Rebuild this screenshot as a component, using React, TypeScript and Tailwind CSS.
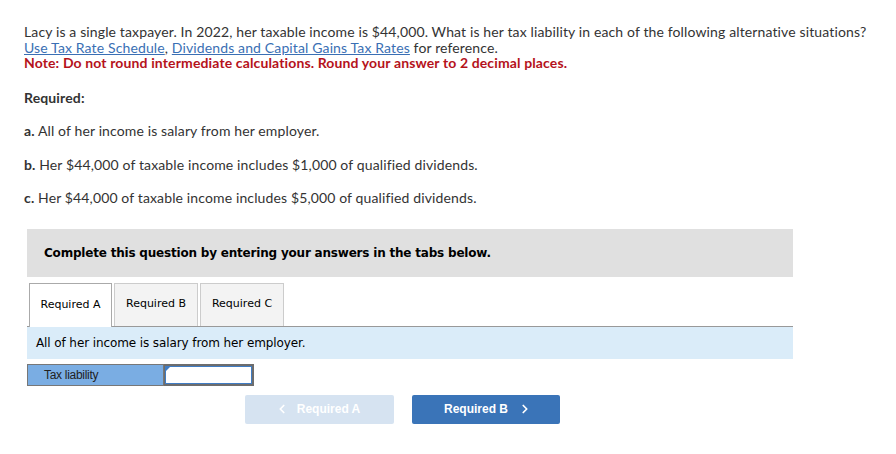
import { ChevronLeft, ChevronRight } from 'lucide-react';

const body = { fontFamily: 'Lato, "Open Sans", sans-serif' };
const verdana = { fontFamily: '"DejaVu Sans", Verdana, sans-serif' };
const arial = { fontFamily: '"Liberation Sans", Arial, sans-serif' };

export default function App() {
  const tabs = ['Required A', 'Required B', 'Required C'];

  return (
    <div className="h-[454px] w-[896px] bg-white text-[#333]">
      {/* Question */}
      <div
        className="pl-[24px] pt-[24px] text-[14px] leading-[15.5px] tracking-[0.13px]"
        style={body}
      >
        <p>
          Lacy is a single taxpayer. In 2022, her taxable income is $44,000. What is her tax
          liability in each of the following alternative situations?
        </p>
        <p>
          <span className="text-[#3a6fb4] underline">Use Tax Rate Schedule</span>,{' '}
          <span className="text-[#3a6fb4] underline">Dividends and Capital Gains Tax Rates</span>{' '}
          for reference.
        </p>
        <p className="font-bold text-[#b5121b]">
          Note: Do not round intermediate calculations. Round your answer to 2 decimal places.
        </p>

        <p className="mt-[19px] font-bold">Required:</p>
        <p className="mt-[18px]">
          <b>a.</b> All of her income is salary from her employer.
        </p>
        <p className="mt-[18px]">
          <b>b.</b> Her $44,000 of taxable income includes $1,000 of qualified dividends.
        </p>
        <p className="mt-[18px]">
          <b>c.</b> Her $44,000 of taxable income includes $5,000 of qualified dividends.
        </p>
      </div>

      {/* Answer area */}
      <div className="ml-[27px] mt-[23px] w-[766px]">
        <div className="flex h-[48px] items-center bg-[#e0e0e0] px-[17px]">
          <span className="text-[12px] font-bold tracking-[-0.2px] text-black" style={verdana}>
            Complete this question by entering your answers in the tabs below.
          </span>
        </div>

        <div className="mt-[6px] flex gap-[2px] border-b border-[#999] pl-[2px]">
          {tabs.map((t, i) => (
            <div
              key={t}
              className={
                i === 0
                  ? 'relative -mb-px flex h-[44px] w-[83px] items-center justify-center border border-b-0 border-[#aaa] bg-white text-[11px] text-black'
                  : 'flex h-[43px] w-[84px] items-center justify-center border border-b-0 border-[#ccc] bg-[#f3f3f3] text-[11px] text-black'
              }
              style={verdana}
            >
              {t}
            </div>
          ))}
        </div>

        <div className="flex h-[32px] items-center bg-[#daecf9] pl-[9px]">
          <span className="text-[12px] tracking-[-0.1px] text-black" style={verdana}>
            All of her income is salary from her employer.
          </span>
        </div>

        <div className="mt-[5px] flex h-[22px]">
          <div
            className="flex w-[137px] items-center border border-[#777] bg-[#7aade3] pl-[16px] text-[12px] tracking-[-0.3px] text-[#222]"
            style={arial}
          >
            Tax liability
          </div>
          <div className="relative w-[90px] border-2 border-l border-[#6d6d6d]">
            <div className="h-full w-full border border-[#3f7cc4] bg-white" />
            <div className="absolute left-[1px] top-[1px] h-0 w-0 border-r-[4px] border-t-[4px] border-r-transparent border-t-[#3f7cc4]" />
          </div>
        </div>

        <div className="mt-[9px] flex gap-[18px] pl-[218px]" style={arial}>
          <button className="flex h-[29px] w-[149px] items-center justify-center gap-[8px] rounded-[2px] bg-[#d6e3f1] text-[12px] font-bold text-white">
            <ChevronLeft size={14} strokeWidth={3} />
            <span className="pr-[4px]">Required A</span>
          </button>
          <button className="flex h-[29px] w-[148px] items-center justify-center gap-[10px] rounded-[2px] bg-[#3a74b8] text-[12px] font-bold text-white">
            <span className="pl-[4px]">Required B</span>
            <ChevronRight size={14} strokeWidth={3} />
          </button>
        </div>
      </div>
    </div>
  );
}
